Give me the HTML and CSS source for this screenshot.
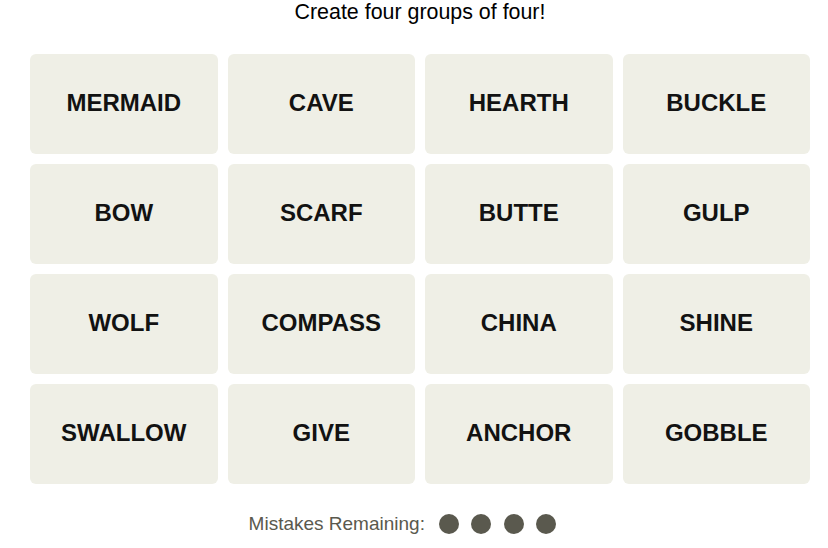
FILE: index.html
```html
<!DOCTYPE html>
<html lang="en">
<head>
    <meta charset="UTF-8">
    <meta name="viewport" content="width=device-width, initial-scale=1.0">
    <title>Connections</title>
    <link rel="stylesheet" href="styles.css">
</head>
<body>

    <div class="game">
        <p class="prompt">Create four groups of four!</p>

        <div class="board">
            <button class="tile">MERMAID</button>
            <button class="tile">CAVE</button>
            <button class="tile">HEARTH</button>
            <button class="tile">BUCKLE</button>
            <button class="tile">BOW</button>
            <button class="tile">SCARF</button>
            <button class="tile">BUTTE</button>
            <button class="tile">GULP</button>
            <button class="tile">WOLF</button>
            <button class="tile">COMPASS</button>
            <button class="tile">CHINA</button>
            <button class="tile">SHINE</button>
            <button class="tile">SWALLOW</button>
            <button class="tile">GIVE</button>
            <button class="tile">ANCHOR</button>
            <button class="tile">GOBBLE</button>
        </div>

        <div class="mistakes">
            <span class="mistakes-label">Mistakes Remaining:</span>
            <span class="dots">
                <span class="dot"></span>
                <span class="dot"></span>
                <span class="dot"></span>
                <span class="dot"></span>
            </span>
        </div>
    </div>

</body>
</html>
```

FILE: styles.css
```css
body {
    margin: 0;
    background-color: #fff;
    font-family: "Liberation Sans", Arial, sans-serif;
    color: #121212;
}
.game {
    width: 780px;
    margin-left: 30px;
}
.prompt {
    margin: 0;
    font-size: 21.4px;
    line-height: 24px;
    text-align: center;
    color: #000;
}
.board {
    display: grid;
    grid-template-columns: repeat(4, 1fr);
    grid-auto-rows: 100px;
    gap: 10px;
    margin-top: 30px;
}
.tile {
    border: none;
    border-radius: 6px;
    background-color: #efefe6;
    color: #121212;
    font-family: "Liberation Sans", Arial, sans-serif;
    font-size: 24px;
    font-weight: bold;
    padding: 0 0 2px;
    cursor: pointer;
}
.mistakes {
    display: flex;
    justify-content: center;
    align-items: center;
    gap: 14px;
    height: 20px;
    margin-top: 30px;
    padding-right: 35px;
}
.mistakes-label {
    font-size: 19px;
    color: #5a594e;
}
.dots {
    display: flex;
    gap: 12.5px;
}
.dot {
    width: 20px;
    height: 20px;
    border-radius: 50%;
    background-color: #5a594e;
}
```
